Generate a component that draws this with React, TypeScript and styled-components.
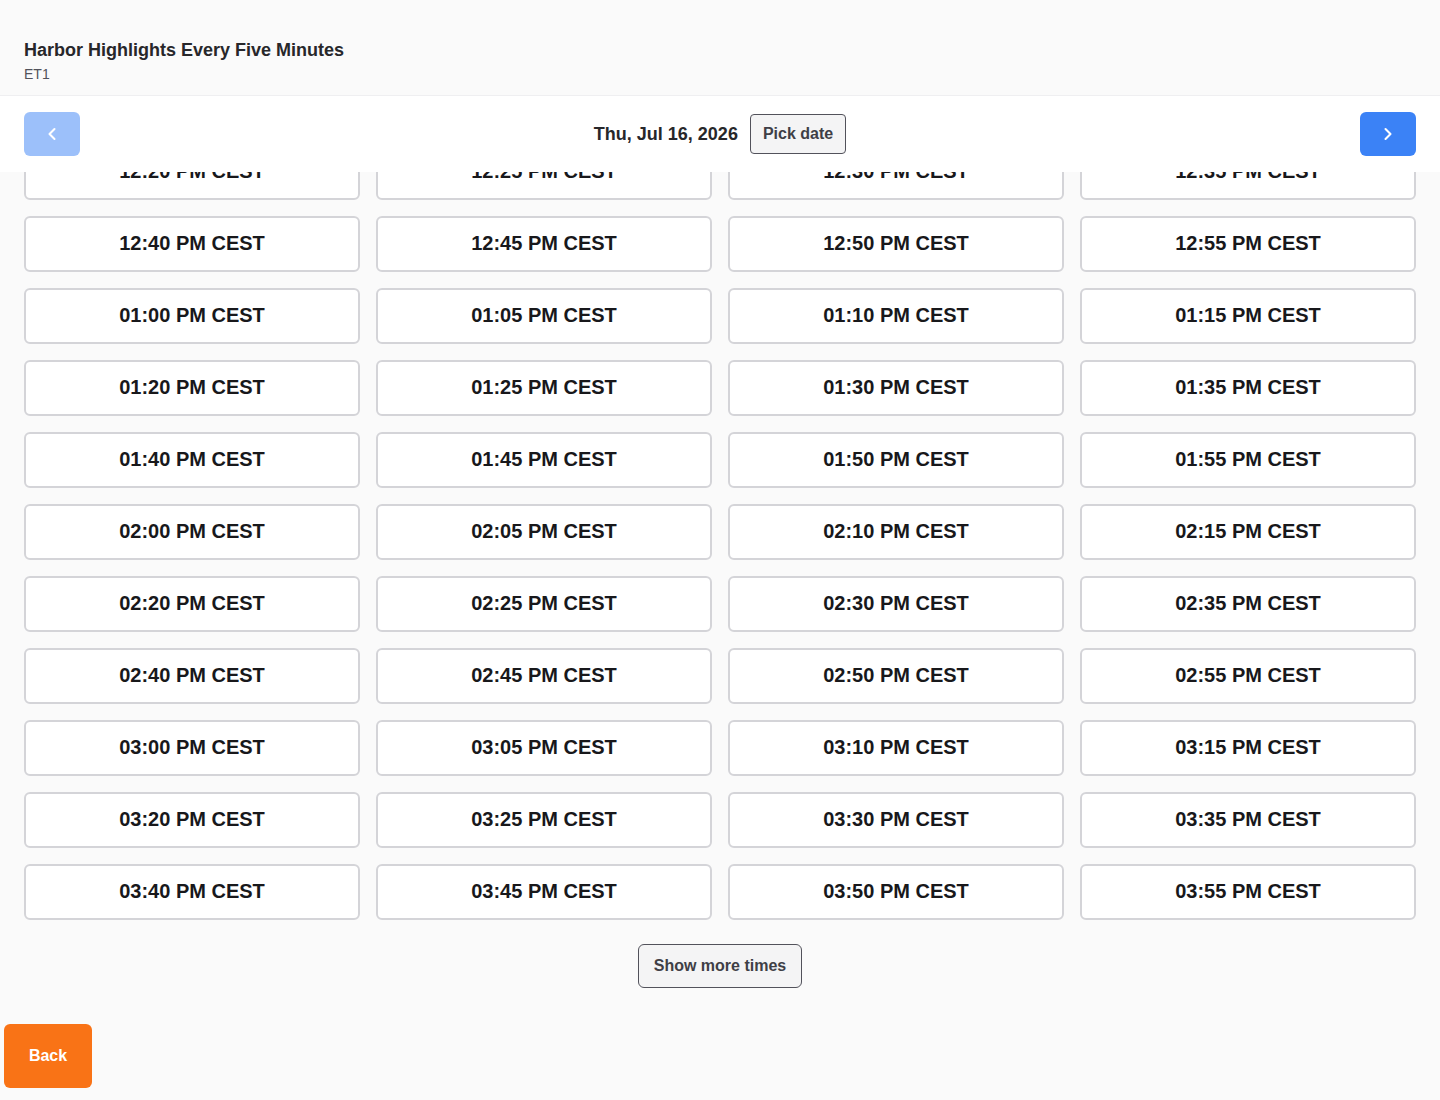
import { useLayoutEffect, useRef } from "react";
import styled, { createGlobalStyle } from "styled-components";
import { ChevronLeft, ChevronRight } from "lucide-react";

const GlobalStyle = createGlobalStyle`
  html, body {
    margin: 0;
    padding: 0;
    height: 100%;
    overflow: hidden;
    background: #fafafa;
    font-family: "Liberation Sans", Arial, Helvetica, sans-serif;
    color: #27272a;
  }
  #root {
    height: 100%;
  }
  * {
    box-sizing: border-box;
  }
`;

const buildSlots = () => {
  const slots: string[] = [];
  for (let h = 12; h < 16; h++) {
    for (let m = 0; m < 60; m += 5) {
      const hour = h > 12 ? h - 12 : h;
      slots.push(
        `${String(hour).padStart(2, "0")}:${String(m).padStart(2, "0")} PM CEST`
      );
    }
  }
  return slots;
};

const slots = buildSlots();

const Page = styled.div`
  height: 100vh;
  display: flex;
  flex-direction: column;
`;

const TopBar = styled.header`
  flex-shrink: 0;
`;

const TitleBlock = styled.div`
  padding: 37px 24px 10px;
  background: #fafafa;
  border-bottom: 1px solid #efeff1;
`;

const Title = styled.h1`
  margin: 0;
  font-size: 18px;
  line-height: 27px;
  font-weight: 700;
  color: #27272a;
`;

const Subtitle = styled.div`
  font-size: 14px;
  line-height: 21px;
  color: #52525b;
`;

const NavBar = styled.nav`
  background: #ffffff;
  padding: 16px 24px;
  display: flex;
  align-items: center;
  justify-content: space-between;
`;

const ArrowButton = styled.button<{ $disabled?: boolean }>`
  width: 56px;
  height: 44px;
  border: none;
  border-radius: 6px;
  background: #3b82f6;
  opacity: ${(p) => (p.$disabled ? 0.5 : 1)};
  color: #ffffff;
  display: flex;
  align-items: center;
  justify-content: center;
  cursor: ${(p) => (p.$disabled ? "default" : "pointer")};
  padding: 0;
`;

const DateGroup = styled.div`
  display: flex;
  align-items: center;
  gap: 12px;
`;

const DateLabel = styled.span`
  font-size: 18px;
  font-weight: 700;
  color: #27272a;
`;

const GhostButton = styled.button<{ $height: number; $radius: number }>`
  height: ${(p) => p.$height}px;
  padding: 0 15px;
  background: #f4f4f5;
  border: 1px solid #52525b;
  border-radius: ${(p) => p.$radius}px;
  font-family: inherit;
  font-size: 16px;
  font-weight: 700;
  color: #3f3f46;
  cursor: pointer;
`;

const PickButton = styled(GhostButton)`
  padding: 0 12px;
`;

const ScrollArea = styled.div`
  flex: 1;
  min-height: 0;
  overflow-y: auto;
  scrollbar-width: none;
  &::-webkit-scrollbar {
    display: none;
  }
`;

const Main = styled.main`
  padding: 16px 24px 0;
`;

const SlotGrid = styled.div`
  display: grid;
  grid-template-columns: repeat(4, 1fr);
  gap: 16px;
`;

const SlotButton = styled.button`
  height: 56px;
  padding: 0 0 2px;
  background: #ffffff;
  border: 2px solid #d4d4d8;
  border-radius: 6px;
  font-family: inherit;
  font-size: 20px;
  font-weight: 700;
  color: #18181b;
  cursor: pointer;
`;

const MoreRow = styled.div`
  display: flex;
  justify-content: center;
  padding-top: 24px;
`;

const Footer = styled.footer`
  padding: 36px 4px 12px;
`;

const BackButton = styled.button`
  width: 88px;
  height: 64px;
  border: none;
  border-radius: 6px;
  background: #f97316;
  color: #ffffff;
  font-family: inherit;
  font-size: 16px;
  font-weight: 700;
  cursor: pointer;
`;

export default function App() {
  const scrollRef = useRef<HTMLDivElement>(null);

  useLayoutEffect(() => {
    const el = scrollRef.current;
    if (el) {
      el.scrollTop = el.scrollHeight;
    }
  }, []);

  return (
    <>
      <GlobalStyle />
      <Page>
        <TopBar>
          <TitleBlock>
            <Title>Harbor Highlights Every Five Minutes</Title>
            <Subtitle>ET1</Subtitle>
          </TitleBlock>
          <NavBar>
            <ArrowButton $disabled aria-label="Previous day">
              <ChevronLeft size={20} strokeWidth={2.5} />
            </ArrowButton>
            <DateGroup>
              <DateLabel>Thu, Jul 16, 2026</DateLabel>
              <PickButton $height={40} $radius={4}>
                Pick date
              </PickButton>
            </DateGroup>
            <ArrowButton aria-label="Next day">
              <ChevronRight size={20} strokeWidth={2.5} />
            </ArrowButton>
          </NavBar>
        </TopBar>
        <ScrollArea ref={scrollRef}>
          <Main>
            <SlotGrid>
              {slots.map((slot) => (
                <SlotButton key={slot}>{slot}</SlotButton>
              ))}
            </SlotGrid>
            <MoreRow>
              <GhostButton $height={44} $radius={6}>
                Show more times
              </GhostButton>
            </MoreRow>
          </Main>
          <Footer>
            <BackButton>Back</BackButton>
          </Footer>
        </ScrollArea>
      </Page>
    </>
  );
}
